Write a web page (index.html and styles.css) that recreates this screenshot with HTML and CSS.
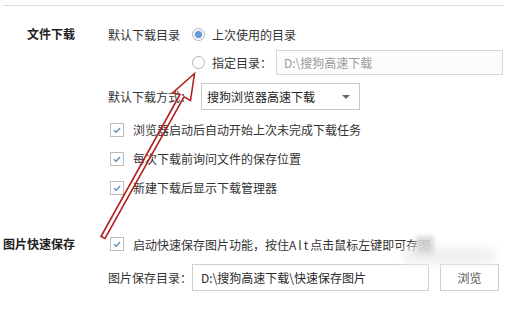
FILE: index.html
```html
<!DOCTYPE html>
<html lang="zh-CN">
<head>
<meta charset="utf-8">
<link rel="stylesheet" href="styles.css">
</head>
<body>
<div class="page">
  <div class="rule"></div>

  <section class="sec sec-download">
    <div class="sec-title">文件下载</div>
    <div class="sec-body">
      <div class="row row-a">
        <span class="lbl">默认下载目录</span>
        <span class="radio checked"></span>
        <span class="opt">上次使用的目录</span>
      </div>
      <div class="row row-b">
        <span class="radio"></span>
        <span class="opt">指定目录：</span>
        <div class="field field-dir disabled">D:\搜狗高速下载</div>
      </div>
      <div class="row row-c">
        <span class="lbl">默认下载方式：</span>
        <div class="select">
          <span>搜狗浏览器高速下载</span>
          <span class="caret"></span>
        </div>
      </div>
      <div class="row check">
        <span class="box"><svg viewBox="0 0 14 14"><polyline points="3.5,7.2 6,9.6 10.6,4.6"/></svg></span>
        <span>浏览器启动后自动开始上次未完成下载任务</span>
      </div>
      <div class="row check">
        <span class="box"><svg viewBox="0 0 14 14"><polyline points="3.5,7.2 6,9.6 10.6,4.6"/></svg></span>
        <span>每次下载前询问文件的保存位置</span>
      </div>
      <div class="row check">
        <span class="box"><svg viewBox="0 0 14 14"><polyline points="3.5,7.2 6,9.6 10.6,4.6"/></svg></span>
        <span>新建下载后显示下载管理器</span>
      </div>
    </div>
  </section>

  <section class="sec sec-image">
    <div class="sec-title">图片快速保存</div>
    <div class="sec-body">
      <div class="row check check-img">
        <span class="box"><svg viewBox="0 0 14 14"><polyline points="3.5,7.2 6,9.6 10.6,4.6"/></svg></span>
        <span>启动快速保存图片功能，按住<span class="alt">Alt</span>点击鼠标左键即可存图</span>
      </div>
      <div class="row row-path">
        <span class="lbl">图片保存目录：</span>
        <div class="field field-img">D:\搜狗高速下载\快速保存图片</div>
        <div class="btn">浏览</div>
      </div>
    </div>
  </section>

  <div class="smudge smudge-b"></div>
  <div class="smudge smudge-a"></div>

  <svg class="arrow" viewBox="0 0 508 314" width="508" height="314">
    <polygon points="194.5,73.5 190.5,100.5 184,96.8 105,238.5 101,236.5 180,94.5 172.5,93"/>
  </svg>
</div>
</body>
</html>
```

FILE: styles.css
```css
* { box-sizing: border-box; }

html, body {
  margin: 0;
  padding: 0;
  background: #ffffff;
}

body {
  font-family: "Noto Sans CJK SC", "Liberation Sans", sans-serif;
  font-size: 12px;
  color: #333333;
  width: 508px;
  height: 314px;
  overflow: hidden;
}

.page {
  position: relative;
  width: 508px;
  height: 314px;
  padding-top: 5px;
}

.rule {
  margin: 0 4px 0 3px;
  border-top: 1px solid #dcdcdc;
}

.sec {
  display: grid;
  grid-template-columns: 75px 1fr;
  column-gap: 33px;
}

.sec-download { margin-top: 16px; }
.sec-image { margin-top: 30px; }

.sec-title {
  text-align: right;
  font-weight: bold;
  color: #1e1e1e;
  height: 24px;
  line-height: 24px;
  white-space: nowrap;
}

.sec-body {
  display: flex;
  flex-direction: column;
}

.row {
  display: flex;
  align-items: center;
  white-space: nowrap;
}

.row-a { height: 24px; }
.row-a .lbl { width: 84px; }

.row-b { height: 25px; margin-top: 4px; padding-left: 84px; }
.row-c { height: 27px; margin-top: 8px; }
.row-c .lbl { width: 93px; }

.radio {
  width: 13px;
  height: 13px;
  border: 1px solid #b4b4b4;
  border-radius: 50%;
  background: #fff;
  margin-right: 7px;
  display: flex;
  align-items: center;
  justify-content: center;
  flex: none;
}

.radio.checked::after {
  content: "";
  width: 7px;
  height: 7px;
  border-radius: 50%;
  background: #6a98d2;
  box-shadow: 0 0 2px #a8c4ea;
}

.field {
  height: 25px;
  border: 1px solid #d6d6d6;
  display: flex;
  align-items: center;
  padding-left: 7px;
  background: #fff;
}

.field-dir {
  margin-left: 4px;
  width: 227px;
  color: #9a9a9a;
  background: #fcfcfc;
}

.select {
  width: 159px;
  height: 27px;
  border: 1px solid #c8c8c8;
  display: flex;
  align-items: center;
  justify-content: space-between;
  padding: 0 9px 0 5px;
  color: #222;
}

.caret {
  width: 0;
  height: 0;
  border-left: 4px solid transparent;
  border-right: 4px solid transparent;
  border-top: 4px solid #666;
}

.check { height: 29px; padding-left: 2px; }
.row-c + .check { margin-top: 5px; }

.box {
  width: 14px;
  height: 14px;
  border: 1px solid #bcbcbc;
  background: #fff;
  margin-right: 9px;
  flex: none;
  display: flex;
}

.box svg {
  width: 12px;
  height: 12px;
}

.box polyline {
  fill: none;
  stroke: #5f8db8;
  stroke-width: 1.6;
}

.check-img { height: 24px; }

.alt { letter-spacing: 2px; }

.row-path { height: 27px; margin-top: 8px; }
.row-path .lbl { width: 84px; }

.field-img {
  height: 27px;
  width: 237px;
  border-color: #cfcfcf;
  color: #2a2a2a;
  padding-left: 8px;
}

.btn {
  margin-left: 11px;
  width: 59px;
  height: 27px;
  border: 1px solid #cfcfcf;
  display: flex;
  align-items: center;
  justify-content: center;
  color: #555;
}

.smudge {
  position: absolute;
  pointer-events: none;
}

.smudge-a {
  left: 416px;
  top: 236px;
  width: 18px;
  height: 18px;
  background: rgba(214, 214, 214, 0.85);
  filter: blur(2px);
}

.smudge-b {
  left: 404px;
  top: 248px;
  width: 92px;
  height: 16px;
  background: #f0f0f0;
  filter: blur(4px);
}

.arrow {
  position: absolute;
  left: 0;
  top: 0;
  pointer-events: none;
}

.arrow polygon {
  fill: none;
  stroke: #b0231f;
  stroke-width: 1.6;
  stroke-linejoin: miter;
}
```
